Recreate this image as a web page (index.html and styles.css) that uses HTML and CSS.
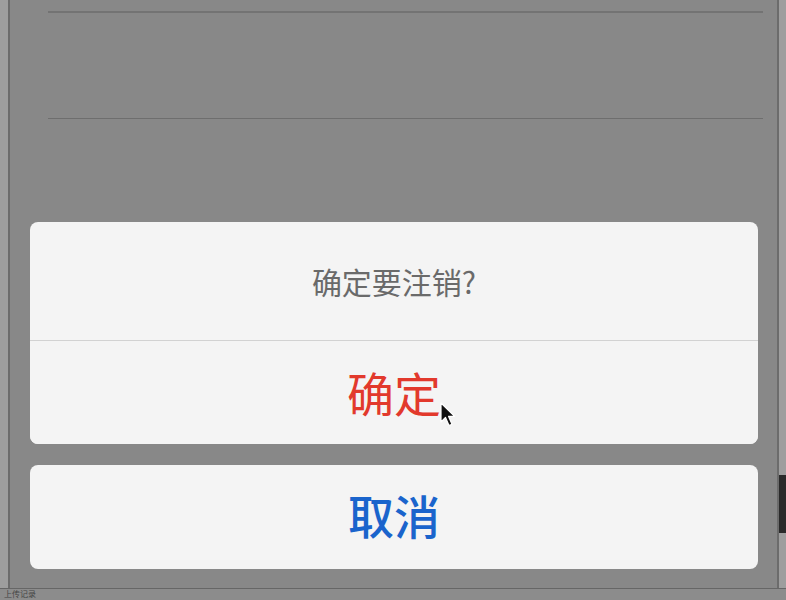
FILE: index.html
```html
<!DOCTYPE html>
<html lang="zh">
<head>
  <meta charset="UTF-8">
  <title>注销确认</title>
  <link rel="stylesheet" href="styles.css">
</head>
<body>
  <div class="screen">
    <div class="edge left"></div>
    <div class="frame">
      <div class="list">
        <div class="row row-top"></div>
        <div class="row"></div>
      </div>

      <div class="sheet">
        <div class="group">
          <div class="title">确定要注销?</div>
          <button class="action danger">确定</button>
        </div>
        <button class="action cancel">取消</button>
      </div>
    </div>
    <div class="edge right"><span class="tab"></span></div>

    <svg class="cursor" width="16" height="26" viewBox="0 0 16 26">
      <path d="M1 1 L1 20 L5.5 15.5 L9 23.5 L12 22.2 L8.6 14.4 L14.6 14.4 Z" fill="#111" stroke="#fff" stroke-width="1.2" stroke-linejoin="round"/>
    </svg>
  </div>
  <div class="footer">上传记录</div>
</body>
</html>
```

FILE: styles.css
```css
* { box-sizing: border-box; }
body { margin: 0; background: #8c8c8c; font-family: "Noto Sans CJK SC", "Noto Sans", sans-serif; overflow: hidden; }

.screen { position: relative; display: flex; height: 589px; background: #888; border-bottom: 1px solid #666; }
.edge { flex: none; background: #9e9e9e; }
.edge.left { width: 8px; }
.edge.right { width: 7px; display: flex; flex-direction: column; padding-top: 475px; }
.edge .tab { height: 58px; background: #2a2a2a; }

.frame { flex: 1; display: flex; flex-direction: column; background: #888; border-left: 2px solid #6c6c6c; border-right: 2px solid #6c6c6c; }

.list { margin: 0 14px 0 38px; }
.row { height: 106px; border-bottom: 1px solid #6e6e6e; }
.row-top { height: 13px; border-bottom: 2px solid #737373; }

.sheet { margin-top: auto; padding: 0 19px 19px 20px; display: flex; flex-direction: column; gap: 21px; }
.group { background: #f4f4f4; border-radius: 8px; overflow: hidden; }
.title { height: 119px; display: flex; align-items: center; justify-content: center; border-bottom: 1px solid #d2d2d2; font-size: 30px; color: #6a6a6a; }

.action { display: flex; align-items: center; justify-content: center; width: 100%; border: 0; background: #f4f4f4; font-family: inherit; font-size: 47px; padding: 0; }
.group .action { height: 103px; padding-bottom: 2px; }
.danger { color: #e2392c; }
.cancel { height: 104px; border-radius: 8px; color: #1a64cc; font-weight: 500; font-size: 46px; padding-bottom: 6px; }

.cursor { position: absolute; left: 440px; top: 402px; }

.footer { height: 10px; padding-left: 4px; font-size: 8px; line-height: 10px; color: #444; }
```
